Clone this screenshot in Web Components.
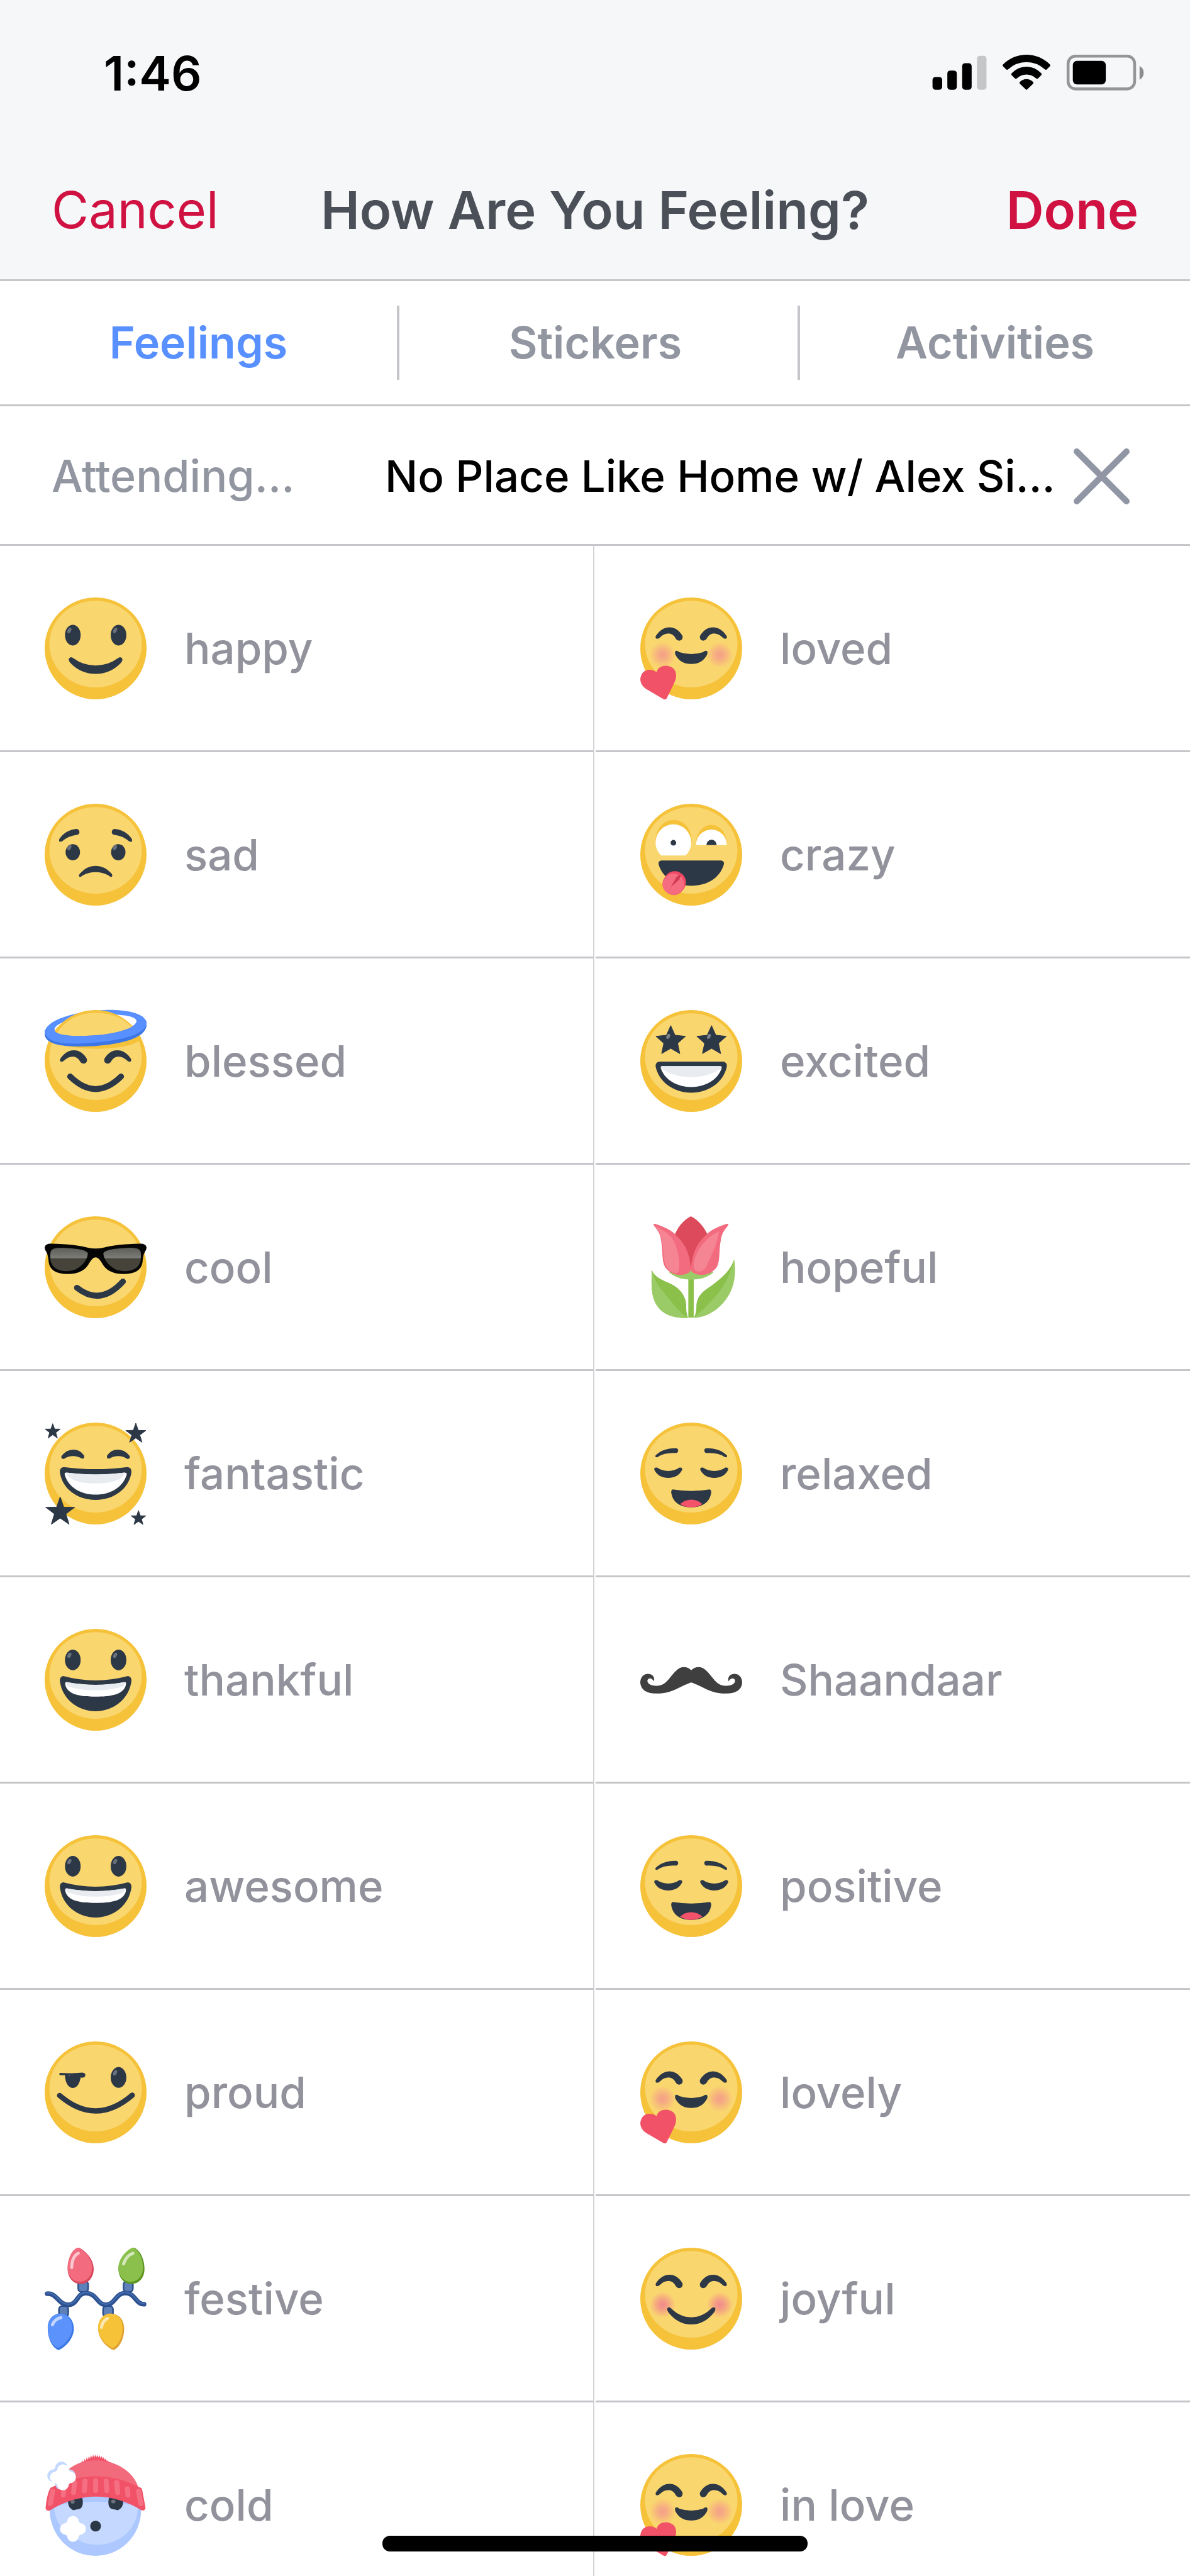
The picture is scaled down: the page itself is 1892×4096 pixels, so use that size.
<!DOCTYPE html>
<html lang="en">
<head>
<meta charset="utf-8">
<meta name="viewport" content="width=device-width, initial-scale=1">
<title>How Are You Feeling?</title>
<style>
  html, body { margin: 0; background: #fff; }
  body {
    font-family: Inter, "Liberation Sans", sans-serif;
    --line: #c5c6c9;
    --muted: #9296a1;
    --label: #91929b;
    --bar: #f5f7f9;
    --accent: #d01242;
    --active: #5890ff;
  }
</style>
</head>
<body>
<feeling-screen>
  <status-bar slot="top" time="1:46"></status-bar>
  <nav-bar slot="top" cancel="Cancel" done="Done">How Are You Feeling?</nav-bar>
  <tab-strip slot="top">
    <tab-item active>Feelings</tab-item>
    <tab-item>Stickers</tab-item>
    <tab-item>Activities</tab-item>
  </tab-strip>
  <current-activity slot="top" kind="Attending…">No Place Like Home w/ Alex Si…</current-activity>
  <feeling-item emoji="happy">happy</feeling-item>
  <feeling-item emoji="loved">loved</feeling-item>
  <feeling-item emoji="sad">sad</feeling-item>
  <feeling-item emoji="crazy">crazy</feeling-item>
  <feeling-item emoji="blessed">blessed</feeling-item>
  <feeling-item emoji="excited">excited</feeling-item>
  <feeling-item emoji="cool">cool</feeling-item>
  <feeling-item emoji="tulip">hopeful</feeling-item>
  <feeling-item emoji="fantastic">fantastic</feeling-item>
  <feeling-item emoji="relaxed">relaxed</feeling-item>
  <feeling-item emoji="grin">thankful</feeling-item>
  <feeling-item emoji="mustache">Shaandaar</feeling-item>
  <feeling-item emoji="grin">awesome</feeling-item>
  <feeling-item emoji="relaxed">positive</feeling-item>
  <feeling-item emoji="proud">proud</feeling-item>
  <feeling-item emoji="loved">lovely</feeling-item>
  <feeling-item emoji="lights">festive</feeling-item>
  <feeling-item emoji="joyful">joyful</feeling-item>
  <feeling-item emoji="cold">cold</feeling-item>
  <feeling-item emoji="loved">in love</feeling-item>
</feeling-screen>

<script>
const DARK = '#2d3846';

function define(name, render) {
  customElements.define(name, class extends HTMLElement {
    connectedCallback() {
      if (this.shadowRoot) return;
      this.attachShadow({ mode: 'open' }).innerHTML = render(this);
    }
  });
}

const buttonReset = 'button{font:inherit;color:inherit;background:none;border:0;margin:0;padding:0;cursor:pointer}';

/* ---------- drawing helpers: every emoji lives in a 164 x 164 box ---------- */
const mirror = s => s + `<g transform="translate(164 0) scale(-1 1)">${s}</g>`;
const shift = (dy, s) => `<g transform="translate(0 ${dy})">${s}</g>`;
const dark = d => `<path fill="${DARK}" d="${d}"/>`;

function star(cx, cy, r, ratio) {
  let p = '';
  for (let i = 0; i < 10; i++) {
    const a = -Math.PI / 2 + i * Math.PI / 5, q = i % 2 ? r * ratio : r;
    p += (cx + q * Math.cos(a)).toFixed(1) + ',' + (cy + q * Math.sin(a)).toFixed(1) + ' ';
  }
  return `<polygon fill="${DARK}" stroke="${DARK}" stroke-width="1" stroke-linejoin="round" points="${p}"/>`;
}

const head = '<circle cx="82" cy="82" r="82" fill="#f5c23a"/><ellipse cx="82" cy="75" rx="74.4" ry="69.8" fill="#fad66f"/>';

const eye = (cx, cy, rx, ry) =>
  `<ellipse cx="${cx}" cy="${cy}" rx="${rx}" ry="${ry}" fill="${DARK}"/>` +
  `<ellipse cx="${cx - 5.5}" cy="${cy - 7.5}" rx="2.8" ry="4.6" fill="#69717c" transform="rotate(28 ${cx - 5.5} ${cy - 7.5})"/>`;
const eyes = cy => eye(45.3, cy, 12.6, 16.7) + eye(118.9, cy, 12.6, 16.7);

const smileEyes = mirror(dark('M25 62Q34 48 47 48Q60 48 68 62Q69 69 63 69.5Q59 69.5 57 66Q53 58.5 46 58Q38 58 31.5 64.5Q28 67.500 25.500 66Q24 65 25 62Z'));

const cheeks = (color, y) =>
  `<defs><radialGradient id="c"><stop offset="0" stop-color="${color}"/><stop offset=".35" stop-color="${color}" stop-opacity=".75"/><stop offset="1" stop-color="${color}" stop-opacity="0"/></radialGradient></defs>` +
  mirror(`<circle cx="36" cy="${y}" r="21" fill="url(#c)"/>`);

const arc = (d, w) => `<path d="${d}" fill="none" stroke="${DARK}" stroke-width="${w}" stroke-linecap="round"/>`;

const BULB = 'M51.500 1Q54 -.8 57 .8C70 8 79 22 79 34C79 48 70 58.500 58 58.500C45 58 37 48 37 34C37 20 43 6 51.500 1Z';
function bulb(x, y, t, base, light) {
  return `<path d="${BULB}" transform="${t}" fill="${base}"/>` +
    `<g transform="translate(${x} ${y}) scale(.94 .94) translate(${-x} ${-y})"><path d="${BULB}" transform="${t}" fill="${light}"/></g>`;
}
const glint = (d, w) => `<path d="${d}" fill="none" stroke="#fff" stroke-opacity=".62" stroke-width="${w}" stroke-linecap="round"/>`;

function flake(cx, cy, r, fill) {
  const o = r * .54, q = r * .43, d = r * .98;
  return `<g fill="${fill}"><circle cx="${cx}" cy="${cy - o}" r="${q}"/><circle cx="${cx + o}" cy="${cy}" r="${q}"/>` +
    `<circle cx="${cx}" cy="${cy + o}" r="${q}"/><circle cx="${cx - o}" cy="${cy}" r="${q}"/>` +
    `<path d="M${cx} ${cy - d}L${cx + d} ${cy}L${cx} ${cy + d}L${cx - d} ${cy}Z"/></g>`;
}

const RING = 'M0 36C-2 60 44 60 82 58C122 55 166 46 164 21C162 2 120 -1 96 0C60 2 4 12 0 36Z M15.500 32C16 42 50 43 78 41C112 39 147 30 148 18C148 8 112 6 90 8C60 10 16 18 15.500 32Z';

const EMOJI = {
  happy: () => head + eyes(60.7) +
    dark('M39.500 98Q42 94.500 46.500 98Q62 109.500 82 109.500Q102 109.500 117.500 98Q122 94.500 124.500 98Q126.500 100 123 105Q106 123 82 123Q58 123 41 105Q37.500 100 39.500 98Z'),

  sad: () => head +
    mirror(dark('M23.500 57Q33 42.500 51 40.500Q56 41 56 46Q55.500 49.500 52 50Q38 51.500 28 60.500Q22 63 23.500 57Z')) +
    eye(45.3, 78, 11.6, 13) + eye(118.5, 78, 11.6, 13) +
    dark('M57 112Q68 100 82 100Q96 100 107.500 112Q110 115.500 108 117.500Q106 118.500 102 115Q93 110 82 110Q71 110 62 115Q58 118.500 56 117.500Q54 115.500 57 112Z'),

  loved: () => head + cheeks('#f5a088', 92.5) + smileEyes +
    dark('M57 86Q60 85.500 63 88Q72 91 82 91Q92 91 101 88Q104 85.500 107 86Q109 88 107.500 92Q100 107 82 107Q64 107 56.500 92Q55 88 57 86Z') +
    '<path fill="#f25268" d="M26.300 120.500Q28.500 110 42 109.800Q57.500 111.500 57.700 126Q57.700 132 54.500 138L42.500 162.500Q41 165 37.500 163.700L9 147Q0 141 0 131Q2 117 15 116.500Q22 116.500 26.300 120.500Z"/>',

  crazy: () => head +
    '<path fill="#f5c23a" d="M24.500 62C24 14 84 14 82.500 62ZM89.700 66.600C90 23.500 139 23.500 139.500 66.600Z"/>' +
    '<path fill="#fff" d="M33.500 83.300A28.700 29 0 1 1 73 83.300ZM89.700 66.600C91 33.500 138 33.500 139.300 66.600Z"/>' +
    `<circle cx="53.300" cy="62.800" r="4.500" fill="${DARK}"/><path fill="${DARK}" d="M106.400 66.600A8.300 8.600 0 0 1 123 66.600Z"/>` +
    dark('M34 91.400H130Q135 92 134.700 97C128 120 108 132 82 132C56 132 36 120 29.300 97Q29 92 34 91.400Z') +
    '<g transform="rotate(35 54.700 127.600)"><rect x="37" y="108.500" width="35.500" height="38.500" rx="17" fill="#f04a64"/><rect x="38" y="113" width="33.500" height="34" rx="16" fill="#f56c80"/><path d="M55 109L58 118L54 136L52 118Z" fill="#cf3b52"/></g>',

  blessed: () => `<path fill="#5890ff" fill-rule="evenodd" d="${RING}"/>` + head +
    '<path fill="#f5c23a" d="M8 50Q60 68 120 60Q142 57 156 47L152 38L10 40Z"/>' +
    '<path fill="#fad66f" d="M18 40Q40 4 82 4.500Q124 5 145 33L140 38L60 46Z"/>' +
    `<defs><clipPath id="f"><path d="M-2 33L17 30L60 41L110 36L148 17L166 16V70H-2Z"/></clipPath></defs>` +
    `<g clip-path="url(#f)"><path fill="#3d76e6" fill-rule="evenodd" d="${RING}"/><g transform="translate(0 -3.500)"><path fill="#5890ff" fill-rule="evenodd" d="M0 38C2 60 44 59 80 56C122 52 160 44 164 26C164 2 120 -1 96 0C60 2 -2 12 0 38ZM15.500 35C16 45.500 50 46.500 78 44.500C112 42.500 147 33.500 148 21.500C148 8 112 6 90 8C60 10 16 18 15.500 35Z"/></g></g>` +
    shift(16.8, smileEyes) + arc('M41 107Q82 147.500 123 107', 9.5),

  excited: () => head + star(49, 50, 25, .47) + star(114.7, 50, 25, .47) +
    '<ellipse cx="45" cy="42.500" rx="2.600" ry="4.400" fill="#7b828c" transform="rotate(28 45 42.500)"/><ellipse cx="110.500" cy="42.500" rx="2.600" ry="4.400" fill="#7b828c" transform="rotate(28 110.500 42.500)"/>' +
    dark('M31 83H133Q140 84 139.300 91C134 116 110 133 82 133C54 133 30 116 24.700 91Q24 84 31 83Z') +
    '<path fill="#fff" d="M34.500 90.300H129.500Q132 91.500 130.500 95C124 113 104 124 82 124C60 124 40 113 33.500 95Q32 91.500 34.500 90.300Z"/>' +
    '<path fill="#e8ebef" d="M34.500 90.300H129.500Q131.500 91 130.500 94Q110 108 82 108Q54 108 33.500 94Q32.500 91 34.500 90.300Z"/>',

  cool: () => head +
    '<path fill="#050505" d="M0 50Q1 44 10 44Q50 45 70 50.500Q82 53.500 94 50.500Q114 45 154 44Q163 44 164 50Q164 54 161 58Q158.500 62 157.500 74Q155 93 127 93Q101 93 92 75Q87 66 82 66Q77 66 72 75Q63 93 37 93Q9 93 6.500 74Q5.500 62 3 58Q0 54 0 50Z"/>' +
    '<defs><linearGradient id="l" x2="0" y2="1"><stop offset="0" stop-color="#5d5d58"/><stop offset=".42" stop-color="#7a7a76"/><stop offset=".48" stop-color="#45433a"/><stop offset="1" stop-color="#45433a"/></linearGradient></defs>' +
    mirror('<path fill="url(#l)" d="M10 56Q12 50.500 28 50.500Q68 52 69.700 60Q68 72 58 80Q50 88 36 88.300Q13 88 9.500 71Q8.500 60 10 56Z"/>') +
    arc('M52 115Q90 145 126 105', 9.5),

  tulip: () =>
    '<path fill="#8bc04a" d="M77.300 98H86V163H77.300Z"/>' +
    '<path fill="#8bc04a" d="M18.700 86C22 98 38 104 50 109C66 117 73 130 74 142C73.500 152 75 158 77 163.500C50 165 30 156 22 134C17 120 18 100 18.700 86Z"/>' +
    '<path fill="#9acb66" d="M18.700 86C24 110 38 122 44 130C56 144 64 156 77 163.500C50 165 30 156 22 134C17 120 18 100 18.700 86Z"/>' +
    '<path fill="#9acb66" d="M151 69C146 88 126 104 110 115C96 124 90 134 90.500 146C90 154 89 159 86 163.500C110 163 134 146 146 120C153 104 154 84 151 69Z"/>' +
    '<path fill="#8bc04a" d="M151 69C146 88 126 104 110 115C96 124 90 134 90.500 146C90 154 89 159 86 163.500C104 146 140 120 151 69Z"/>' +
    '<path fill="#9acb66" d="M46 90Q82 82 118 90Q104 102 82 102Q60 102 46 90Z"/>' +
    '<path fill="#dc4a5b" d="M81.500 0C94 6 103 18 109 31L90 85H73L55 31C60 18 69 6 81.500 0Z"/>' +
    '<path fill="#f26b7e" d="M21 13.500Q22 11.500 25 12.500C38 17 50 22 58 31C76 48 80 66 81.500 86C80 92 74 92 70 94C56 96 46 90 40 82C34 72 37 56 33 36C31 24 24 19 21 13.500Z"/>' +
    '<path fill="#f68594" d="M24 16C40 24 50 30 56 44C62 60 64 76 62 88C60 93 52 92 46 86C38 80 38 66 37 56C36 36 32 26 24 16Z"/>' +
    '<path fill="#f26b7e" d="M142 13.500Q141 11.500 138 12.500C125 17 113 22 105 31C87 48 83 66 81.500 86C83 92 89 92 93 94C107 96 117 90 123 82C129 72 126 56 130 36C132 24 139 19 142 13.500Z"/>' +
    '<path fill="#f68594" d="M127 24C104 34 86 60 86 80C88 94 102 90 107 80C112 66 122 52 127 24Z"/>',

  fantastic: () => head + star(13, 14.500, 12.8, .4) + star(146.700, 18, 17, .4) + star(25, 144, 24.5, .4) + star(151, 154, 12.500, .4) +
    mirror(dark('M27 54Q35 43.500 46 43.500Q57 43.500 63.500 53Q65 58.500 60 58Q53 54 45.500 54Q38 54 31 58.500Q26 59 27 54Z')) +
    dark('M31 71.500Q57 75 82 75Q107 75 133 71.500Q140 72 139.700 80C136 106 112 124.500 82 124.500C52 124.500 28 106 24.500 80Q24 72 31 71.500Z') +
    '<path fill="#fff" d="M35 80.500Q60 83.500 82 83.500Q104 83.500 129 80.500Q133 81 132 84C126 104 106 116 82 116C58 116 38 104 32.300 84Q31.500 80.500 35 80.500Z"/>' +
    '<path fill="#e8ebef" d="M35 80.500Q60 83.500 82 83.500Q104 83.500 129 80.500Q124 98 82 98Q40 98 35 80.500Z"/>',

  relaxed: () => head +
    mirror(dark('M24.500 53Q36 41 57 41.200Q61 41.500 61 45Q60.500 49 57 49Q38 48.500 28 55.500Q23.500 57 24.500 53Z') +
      dark('M22.500 76Q22 71.500 27 72.500Q35 78 45 78Q55 78 63 72.500Q68 71.500 67.500 76Q61 89 45 89Q29 89 22.500 76Z')) +
    dark('M52 107.500Q67 110 82 110Q97 110 112 107.500Q115 109 114 114C111 130 98 136.500 82 136.500C66 136.500 53 130 50 114Q49 109 52 107.500Z') +
    '<path fill="#f4516a" d="M64 131Q72 124 82 124Q92 124 100 131Q92 136.500 82 136.500Q72 136.500 64 131Z"/>',

  grin: () => head + eyes(50) +
    dark('M30 76Q56 83 82 83Q108 83 134 76Q140 77 139.700 84C136 112 112 132.500 82 132.500C52 132.500 28 112 24.500 84Q24 77 30 76Z') +
    '<path fill="#fff" d="M35 85.500Q58 90 82 90Q106 90 129 85.500Q132 86 130.500 91C126 106 106 109 82 109C58 109 38 106 33.500 91Q32 86 35 85.500Z"/>' +
    '<path fill="#e8ebef" d="M35 85.500Q58 90 82 90Q106 90 129 85.500Q130 88 127 92Q108 99 82 99Q56 99 37 92Q34 88 35 85.500Z"/>',

  mustache: () => mirror('<path fill="#3f3f3f" d="M82.500 67C75 60 66 59.500 58 67C48 76 42 91.500 27 91.500C17 92 11 88 11.500 83C13 78 19 79 22 84.500C24 76 18 72.500 12 72.500C4 73 0 79 0 87C1 98 10 104 25 104C50 105 62 93 82.500 86Z"/>'),

  proud: () => head + eye(118.9, 58, 12.6, 16.7) +
    dark('M32.500 52C32.500 66 38 75 45.300 75C52.500 75 58 66 58.500 52Z') +
    '<path fill="#69717c" d="M36.500 51.500H43Q42 56 39 56Z"/>' +
    dark('M25 50.500L42 51.500L61 50Q66 51 65.500 54.500Q65 58.500 60 58.500L42 54.500L25 54.500Q22 52.500 25 50.500Z') +
    arc('M24 87Q82 137 141 86.500', 8.5),

  lights: () => {
    const wire = 'M4 74C19 72 22 92 38 92C54 91 51 74 66 73C84 73 84 92 99 92C114 91 114 73 130 73C146 73 146 91 160 91';
    const sockets = [[54, 54, 16], [127, 54, 15], [23, 94, 15], [94, 94, 16]]
      .map(([x, y, w]) => `<rect x="${x}" y="${y}" width="${w}" height="17" rx="5" fill="#5d80b9" stroke="#2c4f8b" stroke-width="2.500"/>`).join('');
    return sockets +
      `<path d="${wire}" fill="none" stroke="#2d5190" stroke-width="7.500" stroke-linecap="round"/>` +
      `<path d="${wire}" fill="none" stroke="#4570b0" stroke-width="2" stroke-linecap="round" transform="translate(0 -1)"/>` +
      bulb(37, 0, '', '#d9485b', '#f26b7e') +
      bulb(119, 0, 'translate(197.700 0) scale(-1 1)', '#5d9722', '#8bc04c') +
      bulb(5, 106, 'translate(-32 164.500) scale(1 -1)', '#3a78e6', '#5c92fb') +
      bulb(86, 106, 'translate(165 164.500) scale(-1 -1)', '#dfa233', '#f5c238') +
      glint('M43.500 32Q44 14 54 9', 5) + glint('M127 26Q131 13 142 9', 5) +
      glint('M12.500 124Q16 115 26 112.500', 5) + glint('M91.500 128Q93 118 101 114', 5);
  },

  joyful: () => head + cheeks('#f28a8c', 91.7) + shift(-4.5, smileEyes) +
    dark('M44 97Q46 94.500 50 98Q64 112 82 112Q100 112 114 98Q118 94.500 120.500 97Q122 100 118 105Q103 123.500 82 123.500Q61 123.500 46 105Q42 100 44 97Z'),

  cold: () => {
    let ribs = '';
    for (const [x1, y1, x2, y2] of [[13, 60, 9, 80], [31, 56, 30, 66], [48, 46, 46.500, 62], [65, 43.500, 64, 59]])
      ribs += `<path d="M${x1} ${y1}L${x2} ${y2}" stroke="#f56f83" stroke-width="8" stroke-linecap="round"/>`;
    let tuft = 'M60 14';
    for (let i = 0; i < 13; i++) {
      const x = 61 + i * 3.4, y = 1 + Math.pow((i - 6) / 6, 2) * 9;
      tuft += `L${x.toFixed(1)} ${y.toFixed(1)}L${(x + 1.700).toFixed(1)} ${(y + 4.500).toFixed(1)}`;
    }
    return '<circle cx="81.700" cy="90.500" r="73.500" fill="#adc8ff"/>' +
      '<path fill="#c5d8ff" d="M15 84Q48 77 82 77Q118 77 150 84C150 122 120 146 84 146C70 146 60 143 54 138C30 128 16 108 15 84Z"/>' +
      '<path fill="#f26b7c" d="M14 62C22 30 48 12 82 8C118 12 146 30 152 58L82 50Z"/>' +
      `<path fill="#f25268" d="${tuft}L104 14Q82 6 60 14Z"/>` +
      mirror(dark('M38 73L60 68Q64 84 57 88L46 90.500Q36 86 38 73Z')) +
      '<ellipse cx="45" cy="77" rx="3.500" ry="3" fill="#69717c"/><ellipse cx="110.500" cy="76.500" rx="3.500" ry="3" fill="#69717c"/>' +
      '<path fill="#f25268" d="M12 53.500Q45 36 82 36Q119 36 152 53.500Q156 54 157 58L162.300 86Q162 92 156 90.500Q120 68.500 82 68.500Q44 68.500 8 91Q2 92 1.500 87Q3 68 8 57Q9 54 12 53.500Z"/>' +
      mirror(ribs) + '<path d="M82 43V59" stroke="#f56f83" stroke-width="8" stroke-linecap="round"/>' +
      `<circle cx="82" cy="116" r="8.700" fill="${DARK}"/>` +
      flake(27, 35, 23.500, '#c5d9ff') + flake(29.500, 37.500, 21.500, '#fff') + flake(45.500, 120.500, 21.500, '#fff');
  }
};

/* ---------------------------------- elements ---------------------------------- */
define('feeling-emoji', el => `
  <style>:host{display:block;width:162px;height:162px;flex:none}svg{display:block;width:100%;height:100%;overflow:visible}</style>
  <svg viewBox="0 0 164 164" aria-hidden="true">${EMOJI[el.getAttribute('name')]()}</svg>`);

define('feeling-item', el => `
  <style>
    :host{display:block;height:328px;box-sizing:border-box;border-bottom:3px solid var(--line)}
    ${buttonReset}
    button{display:flex;align-items:center;gap:60px;width:100%;height:100%;box-sizing:border-box;padding-left:71px;
      color:var(--label);font-size:69px;font-weight:500;line-height:84px;text-align:left}
  </style>
  <button type="button"><feeling-emoji name="${el.getAttribute('emoji')}"></feeling-emoji><span><slot></slot></span></button>`);

define('status-bar', el => `
  <style>
    :host{display:flex;align-items:center;justify-content:space-between;height:231px;box-sizing:border-box;
      padding:0 73px 0 165px;background:var(--bar);color:#000}
    time{font-size:76px;font-weight:600;line-height:92px}
    svg{display:block;width:337px;height:57px}
  </style>
  <time>${el.getAttribute('time')}</time>
  <svg viewBox="72 57 1025 174" role="img" aria-label="Signal, Wi-Fi and battery">
    <rect x="72" y="165" width="47" height="62" rx="14"/><rect x="144" y="134" width="46" height="93" rx="14"/>
    <rect x="216" y="98" width="46" height="129" rx="14"/><rect x="288" y="62" width="46" height="165" rx="14" fill="#c5c6c7"/>
    <path d="M414 104Q464 57 528 57Q592 57 642 104Q646 109 642 113L627 128Q622 132 617 128Q578 93 528 93Q478 93 439 128Q434 132 429 128L414 113Q410 109 414 104Z"/>
    <path d="M456 147Q488 115 528 115Q568 115 600 147Q604 151 600 156L584 172Q579 175 575 172Q554 153 528 153Q502 153 481 172Q477 175 472 172L456 156Q452 151 456 147Z"/>
    <path d="M496 189Q510 175 528 175Q546 175 560 189Q564 193 560 198L532 225Q528 229 524 225L496 198Q492 193 496 189Z"/>
    <rect x="730" y="64" width="323" height="159" rx="36" fill="none" stroke="#949596" stroke-width="14"/>
    <rect x="753" y="87" width="160" height="114" rx="20"/>
    <path d="M1077 112Q1097 122 1097 144Q1097 168 1077 178Z" fill="#8b8c8d"/>
  </svg>`);

define('nav-bar', el => `
  <style>
    :host{display:grid;grid-template-columns:1fr auto 1fr;align-items:center;height:216px;box-sizing:border-box;
      padding:0 82px 8px;background:var(--bar);border-bottom:3px solid var(--line);font-size:83px;line-height:100px}
    ${buttonReset}
    button{color:var(--accent)}
    .cancel{justify-self:start;font-size:81px}
    .done{justify-self:end;font-weight:600}
    h1{margin:0;font-size:inherit;font-weight:600;color:#4b4f58}
  </style>
  <button class="cancel" type="button">${el.getAttribute('cancel')}</button>
  <h1><slot></slot></h1>
  <button class="done" type="button">${el.getAttribute('done')}</button>`);

define('tab-strip', () => `
  <style>
    :host{display:block;height:199px;box-sizing:border-box;border-bottom:3px solid var(--line)}
    nav{display:grid;grid-template-columns:635fr 637fr 620fr;align-items:center;height:100%}
    ::slotted(tab-item:nth-of-type(2)){padding-right:10px}
  </style>
  <nav aria-label="Categories"><slot></slot></nav>`);

define('tab-item', el => `
  <style>
    :host{display:block;box-sizing:border-box;border-right:4px solid var(--line)}
    :host(:last-of-type){border-right:0}
    ${buttonReset}
    button{display:block;width:100%;height:118px;color:${el.hasAttribute('active') ? 'var(--active)' : 'var(--muted)'};
      font-size:70px;font-weight:600;line-height:84px}
  </style>
  <button type="button"${el.hasAttribute('active') ? ' aria-current="true"' : ''}><slot></slot></button>`);

define('current-activity', el => `
  <style>
    :host{display:grid;grid-template-columns:530px 1fr auto;align-items:center;height:222px;box-sizing:border-box;
      padding:3px 96px 0 82px;border-bottom:3px solid var(--line);font-size:69px;font-weight:500;line-height:84px}
    ${buttonReset}
    .kind{font-size:70px;color:var(--muted)}
    .name{color:#000;white-space:nowrap}
    svg{display:block;width:89px;height:89px}
  </style>
  <span class="kind">${el.getAttribute('kind')}</span>
  <span class="name"><slot></slot></span>
  <button type="button" aria-label="Remove">
    <svg viewBox="0 0 89 89" fill="none" stroke="#9096a4" stroke-width="10" stroke-linecap="round"><path d="M5 5L84 84M84 5L5 84"/></svg>
  </button>`);

define('feeling-screen', () => `
  <style>
    :host{display:flex;flex-direction:column;height:100vh;overflow:hidden;position:relative;background:#fff}
    header{flex:none}
    main{flex:1;min-height:0;overflow:hidden;display:grid;grid-template-columns:1fr 1fr;column-gap:2px;align-content:start}
    ::slotted(feeling-item:nth-of-type(odd)){border-right:2px solid #d2d3d5}
    .home{position:absolute;left:50%;bottom:39px;width:676px;height:25px;border-radius:12px;background:#000;transform:translateX(-50%)}
  </style>
  <header><slot name="top"></slot></header>
  <main><slot></slot></main>
  <div class="home"></div>`);
</script>
</body>
</html>
